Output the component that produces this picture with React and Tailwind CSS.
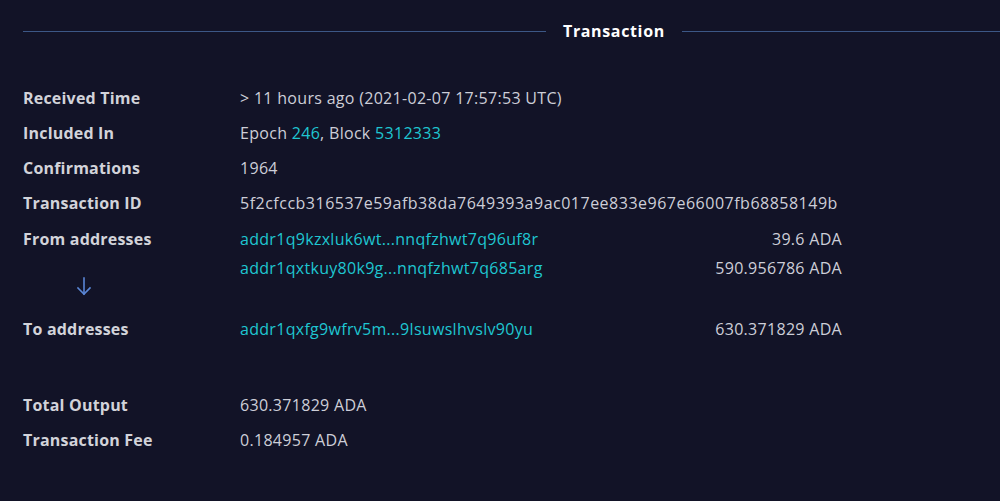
import React from 'react';

const Row = ({ label, children, className = '' }) => (
  <div className={`flex leading-[35px] ${className}`}>
    <div className="w-[217px] shrink-0 font-bold tracking-[0.2px] text-[#d2d3da]">{label}</div>
    <div className="flex-1 text-[#cdced8]">{children}</div>
  </div>
);

const Addr = ({ addr, amount }) => (
  <div className="flex w-[602px] justify-between leading-[29px]">
    <span className="text-[#1fc6d1]">{addr}</span>
    <span className="text-[#cdced8]">{amount}</span>
  </div>
);

const App = () => {
  return (
    <div className="h-[501px] w-[1000px] overflow-hidden bg-[#121327] pl-[23px] text-[16px] tracking-[0.3px] font-['Open_Sans',sans-serif]">
      <div className="flex h-[62px] items-center">
        <div className="h-px w-[523px] bg-[#3c5786]" />
        <div className="mx-[17px] text-[16px] font-bold tracking-[0.04em] text-white">Transaction</div>
        <div className="h-px flex-1 bg-[#3c5786]" />
      </div>

      <div className="mt-[19px] flex flex-col">
        <Row label="Received Time">&gt; 11 hours ago (2021-02-07 17:57:53 UTC)</Row>
        <Row label="Included In">
          Epoch <span className="text-[#1fc6d1]">246</span>, Block <span className="text-[#1fc6d1]">5312333</span>
        </Row>
        <Row label="Confirmations">1964</Row>
        <Row label="Transaction ID">
          <span className="tracking-[0.5px]">5f2cfccb316537e59afb38da7649393a9ac017ee833e967e66007fb68858149b</span>
        </Row>

        <div className="flex pt-[4px]">
          <div className="w-[217px] shrink-0 font-bold leading-[29px] tracking-[0.2px] text-[#d2d3da]">From addresses</div>
          <div>
            <Addr addr="addr1q9kzxluk6wt...nnqfzhwt7q96uf8r" amount="39.6 ADA" />
            <Addr addr="addr1qxtkuy80k9g...nnqfzhwt7q685arg" amount="590.956786 ADA" />
          </div>
        </div>

        <div className="-mt-[6px] flex w-[122px] justify-center">
          <svg width="16" height="19" viewBox="0 0 16 19" fill="none" stroke="#5a86d6" strokeWidth="1.6" strokeLinecap="square">
            <path d="M8 1v16" />
            <path d="M2 11l6 6 6-6" />
          </svg>
        </div>

        <div className="mt-[16px] flex">
          <div className="w-[217px] shrink-0 font-bold leading-[35px] tracking-[0.2px] text-[#d2d3da]">To addresses</div>
          <div className="pt-[3px]">
            <Addr addr="addr1qxfg9wfrv5m...9lsuwslhvslv90yu" amount="630.371829 ADA" />
          </div>
        </div>

        <Row label="Total Output" className="mt-[41px]">630.371829 ADA</Row>
        <Row label="Transaction Fee">0.184957 ADA</Row>
      </div>
    </div>
  );
};

export default App;
